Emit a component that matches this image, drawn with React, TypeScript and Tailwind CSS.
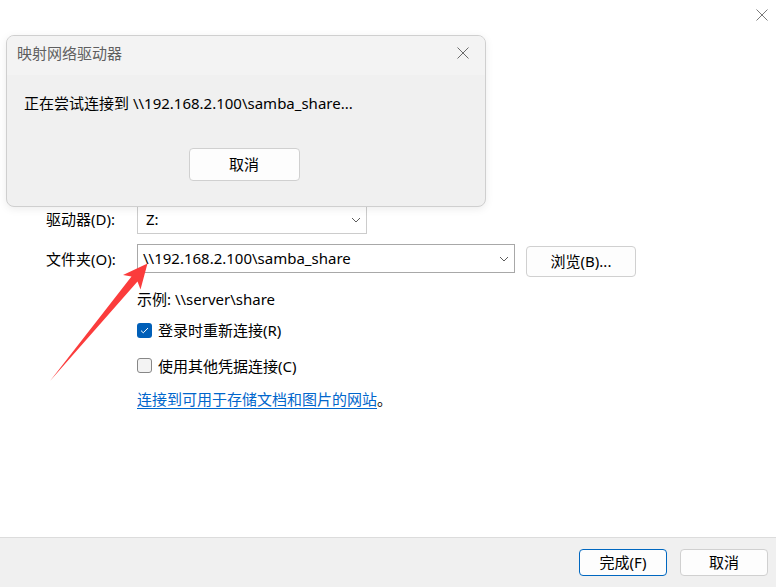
import React from "react";

const font = { fontFamily: '"Segoe UI", "Noto Sans", "Noto Sans CJK SC", sans-serif' };

function Chevron() {
  return (
    <svg width="10" height="6" viewBox="0 0 10 6" className="shrink-0">
      <path d="M1 1 L5 5 L9 1" fill="none" stroke="#5c5c5c" strokeWidth="1" />
    </svg>
  );
}

function CloseX({ color = "#7a7a7a" }: { color?: string }) {
  return (
    <svg width="12" height="12" viewBox="0 0 12 12">
      <path d="M0.5 0.5 L11.5 11.5 M11.5 0.5 L0.5 11.5" stroke={color} strokeWidth="1" />
    </svg>
  );
}

function Checkbox({ checked, label }: { checked: boolean; label: string }) {
  return (
    <label className="flex items-center gap-[6px] text-[15px] text-black">
      {checked ? (
        <span className="flex h-[15px] w-[15px] items-center justify-center rounded-[3px] bg-[#005fb8]">
          <svg width="9" height="7" viewBox="0 0 9 7">
            <path d="M1 3.6 L3.3 5.8 L8 1" fill="none" stroke="white" strokeWidth="1" />
          </svg>
        </span>
      ) : (
        <span className="h-[15px] w-[15px] rounded-[3px] border border-[#878787] bg-[#f3f3f3]" />
      )}
      <span>{label}</span>
    </label>
  );
}

function Arrow() {
  return (
    <svg
      className="pointer-events-none absolute left-0 top-0"
      width="776"
      height="587"
      viewBox="0 0 776 587"
    >
      <polygon
        points="50,381 131.5,276.5 123,275 147.5,263.5 140.5,289.5 137.5,281.5"
        fill="#fb3c3c"
      />
    </svg>
  );
}

export default function App() {
  return (
    <div className="relative h-[587px] w-[776px] overflow-hidden bg-white" style={font}>
      <div className="flex h-full flex-col">
        {/* title bar */}
        <div className="flex h-[30px] justify-end pr-[8px] pt-[9px]">
          <CloseX />
        </div>

        {/* form */}
        <div className="flex flex-1 flex-col pl-[46px] pt-[175px] text-[15px] text-black">
          <div className="flex items-center">
            <span className="w-[91px]">驱动器(D):</span>
            <div className="flex h-[29px] w-[230px] items-center justify-between border border-[#cccccc] bg-white pl-[8px] pr-[5px]">
              <span>Z:</span>
              <Chevron />
            </div>
          </div>

          <div className="mt-[10px] flex items-start">
            <span className="w-[91px] pt-[4px]">文件夹(O):</span>
            <div className="flex h-[29px] w-[378px] items-center justify-between border border-[#a8a8a8] bg-white pl-[5px] pr-[5px]">
              <span>\\192.168.2.100\samba_share</span>
              <Chevron />
            </div>
            <button className="ml-[11px] mt-[2px] h-[31px] w-[110px] rounded-[4px] border border-[#d0d0d0] bg-[#fdfdfd] text-[15px]">
              浏览(B)...
            </button>
          </div>

          <div className="ml-[91px] mt-[11px] flex flex-col items-start">
            <span className="leading-[22px]">示例: \\server\share</span>
            <div className="mt-[9px]">
              <Checkbox checked label="登录时重新连接(R)" />
            </div>
            <div className="mt-[13px]">
              <Checkbox checked={false} label="使用其他凭据连接(C)" />
            </div>
            <div className="mt-[11px] leading-[22px]">
              <a href="#" className="text-[#0066cc] underline underline-offset-[3px]">
                连接到可用于存储文档和图片的网站
              </a>
              <span>。</span>
            </div>
          </div>
        </div>

        {/* bottom bar */}
        <div className="flex h-[50px] items-start justify-end gap-[13px] border-t border-[#dcdcdc] bg-[#f0f0f0] pr-[8px] pt-[11px]">
          <button className="h-[27px] w-[88px] rounded-[4px] border border-[#0067c0] bg-[#fdfdfd] text-[15px] text-black">
            完成(F)
          </button>
          <button className="h-[27px] w-[88px] rounded-[4px] border border-[#d0d0d0] bg-[#fdfdfd] text-[15px] text-black">
            取消
          </button>
        </div>
      </div>

      {/* overlay progress dialog */}
      <div className="absolute left-[6px] top-[35px] flex h-[172px] w-[480px] flex-col overflow-hidden rounded-[8px] border border-[#cfcfcf] bg-[#f0f0f0] shadow-[0_2px_8px_rgba(0,0,0,0.08)]">
        <div className="flex h-[39px] items-start justify-between bg-[#f3f3f3] pl-[10px] pr-[16px] pt-[7px]">
          <span className="text-[15px] leading-[20px] text-[#5f5f5f]">映射网络驱动器</span>
          <span className="pt-[4px]">
            <CloseX color="#6a6a6a" />
          </span>
        </div>
        <div className="pl-[17px] pt-[17px] text-[15px] leading-[22px] text-black">
          正在尝试连接到 \\192.168.2.100\samba_share...
        </div>
        <div className="mt-[34px] flex justify-center pr-[4px]">
          <button className="h-[33px] w-[111px] rounded-[4px] border border-[#d0d0d0] bg-[#fdfdfd] text-[15px] text-black">
            取消
          </button>
        </div>
      </div>

      <Arrow />
    </div>
  );
}
